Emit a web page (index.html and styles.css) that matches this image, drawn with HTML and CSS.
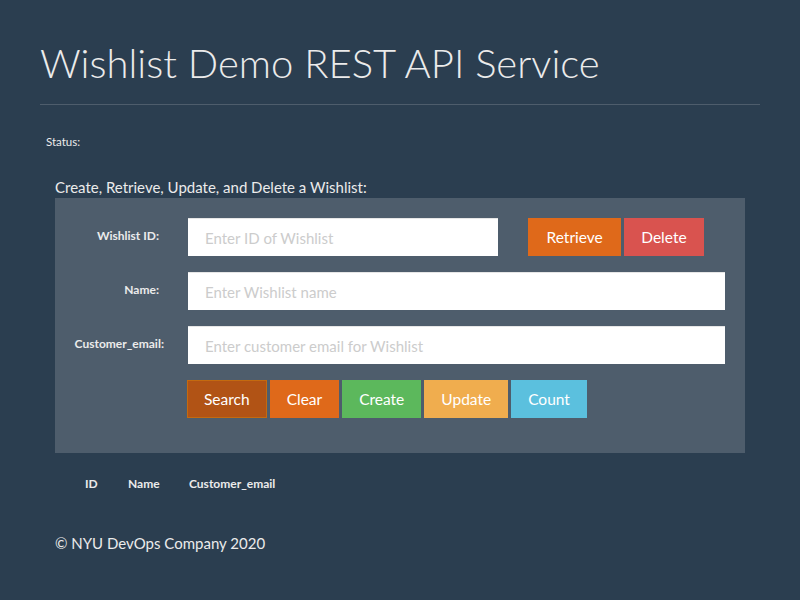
FILE: index.html
```html
<!DOCTYPE html>
<html lang="en">
<head>
    <meta charset="UTF-8">
    <meta name="viewport" content="width=device-width, initial-scale=1.0">
    <title>Wishlist Demo REST API Service</title>
    <link rel="stylesheet" href="styles.css">
</head>
<body>
    <div class="container">
        <div class="page-header">
            <h1>Wishlist Demo REST API Service</h1>
        </div>

        <div class="status">Status:</div>

        <div class="section">
            <h3 class="section-title">Create, Retrieve, Update, and Delete a Wishlist:</h3>
            <div class="well">
                <div class="form-row">
                    <div class="label-col"><label class="control-label" for="wishlist_id">Wishlist ID:</label></div>
                    <input type="text" class="form-control short" id="wishlist_id" placeholder="Enter ID of Wishlist">
                    <div class="side-buttons">
                        <button class="btn btn-primary btn-wide">Retrieve</button>
                        <button class="btn btn-danger">Delete</button>
                    </div>
                </div>
                <div class="form-row">
                    <div class="label-col"><label class="control-label" for="wishlist_name">Name:</label></div>
                    <input type="text" class="form-control" id="wishlist_name" placeholder="Enter Wishlist name">
                </div>
                <div class="form-row">
                    <div class="label-col"><label class="control-label" for="wishlist_email">Customer_email:</label></div>
                    <input type="text" class="form-control" id="wishlist_email" placeholder="Enter customer email for Wishlist">
                </div>
                <div class="form-row">
                    <div class="label-col"></div>
                    <div class="button-bar">
                        <button class="btn btn-primary active">Search</button>
                        <button class="btn btn-primary">Clear</button>
                        <button class="btn btn-success">Create</button>
                        <button class="btn btn-warning">Update</button>
                        <button class="btn btn-info">Count</button>
                    </div>
                </div>
            </div>
        </div>

        <table class="results">
            <thead>
                <tr>
                    <th class="col-id">ID</th>
                    <th class="col-name">Name</th>
                    <th class="col-email">Customer_email</th>
                </tr>
            </thead>
            <tbody></tbody>
        </table>

        <footer class="footer">
            <p>&copy; NYU DevOps Company 2020</p>
        </footer>
    </div>
</body>
</html>
```

FILE: styles.css
```css
* {
    margin: 0;
    padding: 0;
    box-sizing: border-box;
}

body {
    font-family: Lato, "Helvetica Neue", Helvetica, Arial, sans-serif;
    background: #2b3e50;
    color: #ebebeb;
    font-size: 15px;
}

.container {
    width: 720px;
    margin: 0 auto;
    padding-top: 40px;
}

.page-header {
    padding-bottom: 18px;
    border-bottom: 1px solid #4e5d6c;
}

.page-header h1 {
    font-size: 40px;
    font-weight: 300;
    line-height: 46px;
    color: #ebebeb;
}

.status {
    font-size: 11.5px;
    margin: 30px 0 0 6px;
    line-height: 14px;
}

.section {
    margin: 29px 15px 0 15px;
}

.section-title {
    font-size: 15px;
    font-weight: 400;
    line-height: 18px;
    margin-bottom: 2px;
}

.well {
    background: #4e5d6c;
    padding: 20px 20px 35px 0;
}

.form-row {
    display: flex;
    align-items: center;
    margin-bottom: 16px;
}

.form-row:last-child {
    margin-bottom: 0;
}

.label-col {
    width: 84px;
    margin-left: 20px;
    margin-right: 29px;
    flex-shrink: 0;
    display: flex;
    justify-content: flex-end;
}

.control-label {
    font-size: 12px;
    font-weight: 700;
    white-space: nowrap;
    margin-top: -3px;
    text-align: right;
}

.form-row:nth-child(3) .control-label {
    margin-right: -5px;
}

.form-control {
    flex: 1;
    height: 38px;
    border: none;
    border-top: 1px solid #e6e6e6;
    background: #fff;
    padding: 0 17px;
    font-family: inherit;
    font-size: 15px;
    color: #2b3e50;
    outline: none;
}

.form-control.short {
    flex: 0 0 310px;
}

.form-control::placeholder {
    color: #cccccc;
}

.side-buttons {
    display: flex;
    gap: 3px;
    margin-left: 30px;
}

.button-bar {
    display: flex;
    gap: 3px;
    margin-left: -1px;
}

.btn {
    height: 38px;
    border: 1px solid transparent;
    padding: 0 16px;
    font-family: inherit;
    font-size: 15.5px;
    color: #fff;
    cursor: pointer;
}

.btn-wide {
    padding: 0 17.5px;
}

.btn-primary {
    background: #df691a;
}

.btn-primary.active {
    background: #b15315;
    border-color: #c46a0f;
}

.btn-danger {
    background: #d9534f;
}

.btn-success {
    background: #5cb85c;
}

.btn-warning {
    background: #f0ad4e;
}

.btn-info {
    background: #5bc0de;
}

.results {
    margin: 20px 0 0 30px;
    border-collapse: collapse;
    font-size: 12px;
}

.results th {
    font-weight: 700;
    text-align: left;
    padding: 4px 8px;
    line-height: 14px;
}

.col-id {
    width: 50px;
    padding-left: 15px !important;
}

.col-name {
    width: 61px;
}

.footer {
    margin: 39px 0 0 15px;
    font-size: 15px;
}
```
